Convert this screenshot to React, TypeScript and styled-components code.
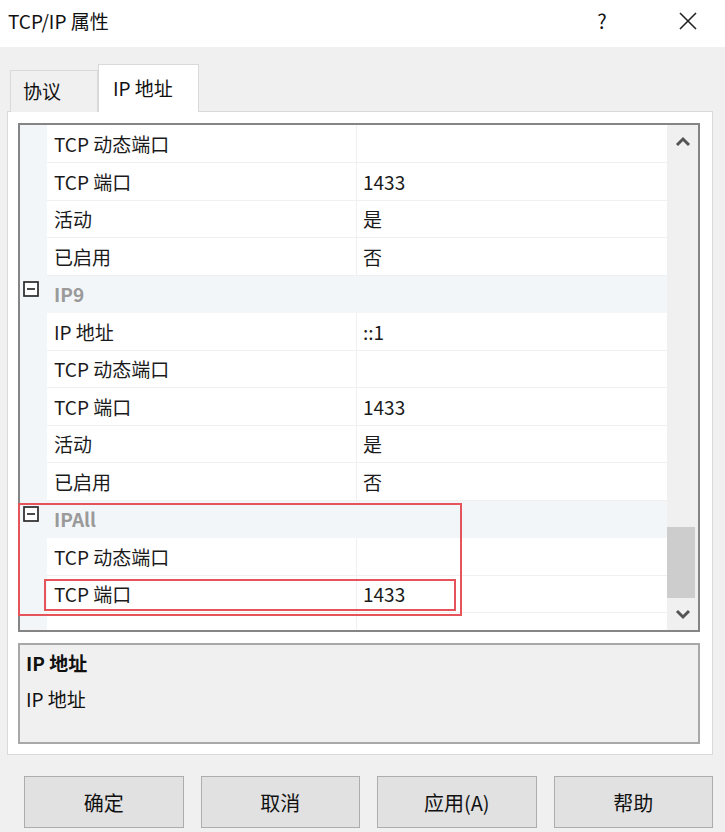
import styled, { createGlobalStyle } from "styled-components";

type Prop =
  | { kind: "group"; name: string }
  | { kind: "item"; name: string; value: string };

const rows: Prop[] = [
  { kind: "item", name: "TCP 动态端口", value: "" },
  { kind: "item", name: "TCP 端口", value: "1433" },
  { kind: "item", name: "活动", value: "是" },
  { kind: "item", name: "已启用", value: "否" },
  { kind: "group", name: "IP9" },
  { kind: "item", name: "IP 地址", value: "::1" },
  { kind: "item", name: "TCP 动态端口", value: "" },
  { kind: "item", name: "TCP 端口", value: "1433" },
  { kind: "item", name: "活动", value: "是" },
  { kind: "item", name: "已启用", value: "否" },
  { kind: "group", name: "IPAll" },
  { kind: "item", name: "TCP 动态端口", value: "" },
  { kind: "item", name: "TCP 端口", value: "1433" },
  { kind: "item", name: "", value: "" },
];

const buttons = ["确定", "取消", "应用(A)", "帮助"];

function CollapseIcon() {
  return (
    <svg width="16" height="16" viewBox="0 0 16 16" style={{ display: "block" }}>
      <rect x="1" y="1" width="14" height="14" fill="#fff" stroke="#2a2a2a" strokeWidth="1.7" />
      <line x1="4" y1="8" x2="12" y2="8" stroke="#2a2a2a" strokeWidth="1.7" />
    </svg>
  );
}

function Chevron({ up }: { up?: boolean }) {
  return (
    <svg width="16" height="11" viewBox="0 0 16 11" style={{ display: "block" }}>
      <polyline
        points={up ? "2,9 8,3 14,9" : "2,2 8,8 14,2"}
        fill="none"
        stroke="#555"
        strokeWidth="3"
      />
    </svg>
  );
}

export default function App() {
  return (
    <>
      <GlobalStyle />
      <Window>
        <TitleBar>
          <Title>TCP/IP 属性</Title>
          <Controls>
            <HelpMark>?</HelpMark>
            <CloseMark>
              <svg width="20" height="20" viewBox="0 0 20 20">
                <path d="M2 2 L18 18 M18 2 L2 18" stroke="#222" strokeWidth="1.6" />
              </svg>
            </CloseMark>
          </Controls>
        </TitleBar>
        <Body>
          <TabStrip>
            <Tab $width={88}>协议</Tab>
            <Tab $active $width={101}>
              IP 地址
            </Tab>
          </TabStrip>
          <Panel>
            <ListBox>
              <Rows>
                {rows.map((r, i) =>
                  r.kind === "group" ? (
                    <GroupRow key={i}>
                      <Gutter>
                        <CollapseIcon />
                      </Gutter>
                      <GroupName>{r.name}</GroupName>
                    </GroupRow>
                  ) : (
                    <Row key={i}>
                      <Gutter />
                      <NameCell>{r.name}</NameCell>
                      <ValueCell>{r.value}</ValueCell>
                    </Row>
                  )
                )}
              </Rows>
              <Scrollbar>
                <ArrowButton>
                  <Chevron up />
                </ArrowButton>
                <Track>
                  <Thumb />
                </Track>
                <ArrowButton>
                  <Chevron />
                </ArrowButton>
              </Scrollbar>
              <Highlight $left={-2} $top={378} $width={444} $height={113} />
              <Highlight $left={24} $top={454} $width={412} $height={32} />
            </ListBox>
            <Description>
              <DescTitle>IP 地址</DescTitle>
              <DescText>IP 地址</DescText>
            </Description>
          </Panel>
          <ButtonRow>
            {buttons.map((b) => (
              <Button key={b} type="button">
                {b}
              </Button>
            ))}
          </ButtonRow>
        </Body>
      </Window>
    </>
  );
}

const GlobalStyle = createGlobalStyle`
  body {
    margin: 0;
    background: #f0f0f0;
    font-family: "Noto Sans CJK SC", "Noto Sans", sans-serif;
    color: #111;
  }
`;

const Window = styled.div`
  width: 725px;
  height: 832px;
  background: #f0f0f0;
  display: flex;
  flex-direction: column;
  overflow: hidden;
`;

const TitleBar = styled.div`
  height: 47px;
  background: #fff;
  display: flex;
  align-items: center;
  justify-content: space-between;
  padding: 0 0 0 8px;
  flex-shrink: 0;
`;

const Title = styled.span`
  font-size: 19px;
  margin-top: -6px;
`;

const Controls = styled.div`
  display: flex;
  align-items: center;
  margin-top: -6px;
`;

const HelpMark = styled.span`
  font-size: 20px;
  width: 30px;
  text-align: center;
`;

const CloseMark = styled.span`
  display: flex;
  align-items: center;
  justify-content: center;
  width: 30px;
  margin: 0 22px 0 56px;
`;

const Body = styled.div`
  display: flex;
  flex-direction: column;
  padding: 0 12px 0 7px;
`;

const TabStrip = styled.div`
  display: flex;
  align-items: flex-end;
  height: 64px;
  padding-left: 3px;
`;

const Tab = styled.div<{ $active?: boolean; $width: number }>`
  box-sizing: border-box;
  width: ${(p) => p.$width}px;
  height: ${(p) => (p.$active ? 48 : 42)}px;
  padding: ${(p) => (p.$active ? "10px 0 0 14px" : "7px 0 0 12px")};
  line-height: 26px;
  font-size: 19px;
  background: ${(p) => (p.$active ? "#fff" : "#f0f0f0")};
  border: 1px solid #d9d9d9;
  border-bottom: none;
  margin-bottom: -1px;
  position: relative;
  z-index: ${(p) => (p.$active ? 1 : 0)};
`;

const Panel = styled.div`
  box-sizing: border-box;
  height: 644px;
  background: #fff;
  border: 1px solid #d9d9d9;
  padding: 11px 12px 10px 10px;
  display: flex;
  flex-direction: column;
  gap: 11px;
`;

const ListBox = styled.div`
  position: relative;
  height: 509px;
  box-sizing: border-box;
  border: 2px solid #858585;
  display: flex;
  background: #fff;
`;

const Rows = styled.div`
  flex: 1;
  overflow: hidden;
`;

const Row = styled.div`
  display: grid;
  grid-template-columns: 27px 310px 1fr;
  height: 37.5px;
  font-size: 19px;
`;

const GroupRow = styled(Row)`
  background: #f3f6f9;
`;

const Gutter = styled.div`
  background: #f3f6f9;
  padding: 6px 0 0 3px;
`;

const Cell = styled.div`
  box-sizing: border-box;
  line-height: 37px;
  border-bottom: 1px solid #f0f0f0;
  white-space: nowrap;
  color: #1a1a1a;
`;

const NameCell = styled(Cell)`
  padding-left: 7px;
  border-right: 1px solid #f0f0f0;
`;

const ValueCell = styled(Cell)`
  padding-left: 6px;
`;

const GroupName = styled.div`
  grid-column: 2 / 4;
  padding-left: 7px;
  line-height: 37.5px;
  font-weight: 700;
  color: #9a9a9a;
`;

const Scrollbar = styled.div`
  width: 31px;
  background: #f0f0f0;
  display: flex;
  flex-direction: column;
`;

const ArrowButton = styled.div`
  height: 32px;
  display: flex;
  align-items: center;
  justify-content: center;
`;

const Track = styled.div`
  flex: 1;
  display: flex;
  flex-direction: column;
  justify-content: flex-end;
`;

const Thumb = styled.div`
  width: 28px;
  height: 71px;
  background: #cdcdcd;
`;

const Highlight = styled.div<{
  $left: number;
  $top: number;
  $width: number;
  $height: number;
}>`
  position: absolute;
  box-sizing: border-box;
  left: ${(p) => p.$left}px;
  top: ${(p) => p.$top}px;
  width: ${(p) => p.$width}px;
  height: ${(p) => p.$height}px;
  border: 2px solid #e5545a;
  pointer-events: none;
`;

const Description = styled.div`
  box-sizing: border-box;
  height: 101px;
  background: #f0f0f0;
  border: 2px solid #a8a8a8;
  padding: 0 0 0 6px;
  font-size: 19px;
`;

const DescTitle = styled.div`
  line-height: 36px;
  font-weight: 700;
`;

const DescText = styled.div`
  line-height: 36px;
`;

const ButtonRow = styled.div`
  display: flex;
  gap: 17px;
  margin: 21px 0 0 17px;
`;

const Button = styled.button`
  width: 161px;
  height: 52px;
  background: #e1e1e1;
  border: 1px solid #adadad;
  border-radius: 0;
  font-family: "Noto Sans CJK SC", "Noto Sans", sans-serif;
  font-size: 20px;
  color: #111;
  padding: 0;
`;
